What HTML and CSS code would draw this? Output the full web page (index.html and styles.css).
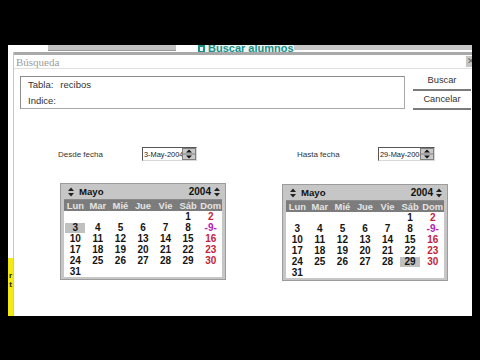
FILE: index.html
```html
<!DOCTYPE html>
<html lang="es">
<head>
<meta charset="utf-8">
<title>Búsqueda</title>
<link rel="stylesheet" href="styles.css">
</head>
<body>
<div class="screen">
  <div class="topstrip">
    <div class="field-behind"></div>
    <div class="tab-behind"><span class="tab-icon"></span><span>Buscar alumnos</span></div>
    <div class="strip-rest"></div>
  </div>
  <div class="main">
    <div class="leftcol">
      <div class="lc-white"></div>
      <div class="lc-yellow"><span>r</span><span>t</span></div>
    </div>
    <div class="dialog">
      <div class="titlebar">
        <span class="title">Búsqueda</span>
        <span class="close">✕</span>
      </div>
      <div class="toprow">
        <div class="groupbox">
          <div><span class="gl">Tabla:</span>recibos</div>
          <div>Indice:</div>
        </div>
        <div class="buttons">
          <div class="btn">Buscar</div>
          <div class="btn">Cancelar</div>
        </div>
      </div>
      <div class="daterow">
        <span class="lbl lbl1">Desde fecha</span>
        <div class="dfield dfield1">
          <span class="dtext">3-May-2004</span>
          <svg class="dspin" width="14" height="12" viewBox="0 0 14 12"><rect x=".5" y=".5" width="13" height="11" fill="#c8c8c8" stroke="#808080"/><line x1="0" y1="6" x2="14" y2="6" stroke="#808080"/><path d="M4 4.5 L7 1.5 L10 4.5Z M4 7.5 L7 10.5 L10 7.5Z" fill="#111"/></svg>
        </div>
        <span class="lbl lbl2">Hasta fecha</span>
        <div class="dfield dfield2">
          <span class="dtext">29-May-2004</span>
          <svg class="dspin" width="14" height="12" viewBox="0 0 14 12"><rect x=".5" y=".5" width="13" height="11" fill="#c8c8c8" stroke="#808080"/><line x1="0" y1="6" x2="14" y2="6" stroke="#808080"/><path d="M4 4.5 L7 1.5 L10 4.5Z M4 7.5 L7 10.5 L10 7.5Z" fill="#111"/></svg>
        </div>
      </div>
      <div class="calrow">
        <div class="cal cal1">
          <div class="cal-head">
            <svg class="cspin" width="6" height="10" viewBox="0 0 6 10"><path d="M0 4 L3 0.5 L6 4Z M0 6 L3 9.5 L6 6Z" fill="#222"/></svg>
            <span class="month">Mayo</span>
            <span class="year">2004</span>
            <svg class="cspin" width="6" height="10" viewBox="0 0 6 10"><path d="M0 4 L3 0.5 L6 4Z M0 6 L3 9.5 L6 6Z" fill="#222"/></svg>
          </div>
          <div class="cal-days"><span>Lun</span><span>Mar</span><span>Mié</span><span>Jue</span><span>Vie</span><span>Sáb</span><span>Dom</span></div>
          <div class="cal-grid">
            <span></span><span></span><span></span><span></span><span></span><span>1</span><span class="sun">2</span>
            <span><b class="sel">3</b></span><span>4</span><span>5</span><span>6</span><span>7</span><span>8</span><span class="today">-9-</span>
            <span>10</span><span>11</span><span>12</span><span>13</span><span>14</span><span>15</span><span class="sun">16</span>
            <span>17</span><span>18</span><span>19</span><span>20</span><span>21</span><span>22</span><span class="sun">23</span>
            <span>24</span><span>25</span><span>26</span><span>27</span><span>28</span><span>29</span><span class="sun">30</span>
            <span>31</span>
          </div>
        </div>
        <div class="cal cal2">
          <div class="cal-head">
            <svg class="cspin" width="6" height="10" viewBox="0 0 6 10"><path d="M0 4 L3 0.5 L6 4Z M0 6 L3 9.5 L6 6Z" fill="#222"/></svg>
            <span class="month">Mayo</span>
            <span class="year">2004</span>
            <svg class="cspin" width="6" height="10" viewBox="0 0 6 10"><path d="M0 4 L3 0.5 L6 4Z M0 6 L3 9.5 L6 6Z" fill="#222"/></svg>
          </div>
          <div class="cal-days"><span>Lun</span><span>Mar</span><span>Mié</span><span>Jue</span><span>Vie</span><span>Sáb</span><span>Dom</span></div>
          <div class="cal-grid">
            <span></span><span></span><span></span><span></span><span></span><span>1</span><span class="sun">2</span>
            <span>3</span><span>4</span><span>5</span><span>6</span><span>7</span><span>8</span><span class="today">-9-</span>
            <span>10</span><span>11</span><span>12</span><span>13</span><span>14</span><span>15</span><span class="sun">16</span>
            <span>17</span><span>18</span><span>19</span><span>20</span><span>21</span><span>22</span><span class="sun">23</span>
            <span>24</span><span>25</span><span>26</span><span>27</span><span>28</span><span><b class="sel">29</b></span><span class="sun">30</span>
            <span>31</span>
          </div>
        </div>
      </div>
    </div>
  </div>
</div>
</body>
</html>
```

FILE: styles.css
```css
html, body {
  margin: 0;
  padding: 0;
  background: #000;
}
body {
  width: 480px;
  height: 360px;
  overflow: hidden;
  font-family: "Liberation Sans", Arial, sans-serif;
}
.screen {
  margin: 45px 0 0 8px;
  width: 464px;
  height: 271px;
  background: #fff;
  display: flex;
  flex-direction: column;
  overflow: hidden;
}
.topstrip {
  height: 7px;
  display: flex;
  overflow: hidden;
  flex: none;
}
.field-behind {
  margin-left: 40px;
  width: 128px;
  height: 6px;
  box-sizing: border-box;
  background: #c2c2c2;
  border-bottom: 1px solid #9a9a9a;
}
.tab-behind {
  margin-left: 22px;
  width: 96px;
  height: 7px;
  display: flex;
  align-items: center;
  gap: 3px;
  overflow: hidden;
  color: #1e8e86;
  font-weight: bold;
  font-size: 11px;
  line-height: 7px;
  background: #eaf6f4;
}
.tab-icon {
  width: 7px;
  height: 8px;
  box-sizing: border-box;
  border: 2px solid #1e8e86;
  flex: none;
}
.strip-rest {
  flex: 1;
  height: 5px;
  background: #c6c6c6;
}
.main {
  flex: 1;
  display: flex;
  min-height: 0;
}
.leftcol {
  width: 5px;
  display: flex;
  flex-direction: column;
  flex: none;
}
.lc-white {
  flex: 1;
}
.lc-yellow {
  height: 58px;
  background: #f3e914;
  display: flex;
  flex-direction: column;
  align-items: center;
  padding-top: 13px;
  box-sizing: border-box;
  font-size: 8px;
  font-weight: bold;
  line-height: 9px;
  color: #222;
  overflow: hidden;
}
.dialog {
  flex: 1;
  border-left: 1px solid #c6c6c6;
  display: flex;
  flex-direction: column;
  min-width: 0;
}
.titlebar {
  flex: none;
  border-top: 3px solid #a9a9a9;
  border-bottom: 1px solid #e0e0e0;
  height: 13px;
  display: flex;
  align-items: center;
  justify-content: space-between;
}
.title {
  margin-left: 2px;
  font-family: "Liberation Serif", "Times New Roman", serif;
  font-size: 11px;
  color: #9c9c9c;
}
.close {
  width: 6px;
  height: 11px;
  background: #c6c6c6;
  color: #666;
  font-size: 9px;
  line-height: 11px;
  overflow: hidden;
  text-indent: 1px;
}
.toprow {
  flex: none;
  display: flex;
  align-items: flex-start;
  margin-top: 3px;
}
.groupbox {
  margin-left: 6px;
  margin-top: 4px;
  width: 385px;
  height: 33px;
  box-sizing: border-box;
  border: 1px solid #8c8c8c;
  border-right-color: #a8a8a8;
  border-bottom-color: #a8a8a8;
  padding-left: 7px;
  font-size: 9.5px;
  line-height: 16px;
  color: #333;
}
.gl {
  margin-right: 7px;
}
.buttons {
  margin-left: 8px;
  width: 58px;
  flex: none;
}
.btn {
  height: 17px;
  border-bottom: 2px solid #7a7a7a;
  text-align: center;
  font-size: 9.3px;
  line-height: 17px;
  color: #333;
}
.daterow {
  flex: none;
  display: flex;
  align-items: center;
  margin-top: 37px;
  height: 14px;
  font-size: 8px;
  color: #333;
}
.lbl {
  flex: none;
}
.lbl1 {
  margin-left: 44px;
  width: 84px;
}
.lbl2 {
  margin-left: 100px;
  width: 81px;
}
.dfield {
  flex: none;
  height: 14px;
  box-sizing: border-box;
  border: 1px solid;
  border-color: #555 #d8d8d8 #d8d8d8 #555;
  display: flex;
  align-items: center;
  background: #fff;
}
.dfield1 {
  width: 55px;
}
.dfield2 {
  width: 57px;
}
.dtext {
  flex: 1;
  min-width: 0;
  overflow: hidden;
  white-space: nowrap;
  font-size: 7.4px;
  padding-left: 1px;
  color: #222;
}
.dspin {
  flex: none;
  display: block;
}
.calrow {
  flex: none;
  display: flex;
  align-items: flex-start;
  margin-top: 22px;
}
.cal {
  flex: none;
  border: 1px solid #9c9c9c;
  background: #c6c6c6;
  padding: 0 3px 2px 3px;
}
.cal1 {
  margin-left: 46px;
}
.cal2 {
  margin-left: 56px;
  margin-top: 1px;
}
.cal-head {
  height: 15px;
  display: flex;
  align-items: center;
  font-weight: bold;
  font-size: 10px;
  color: #111;
  border-bottom: 1px solid #8a8a8a;
}
.cspin {
  display: block;
  flex: none;
}
.cal-head .cspin:first-child {
  margin-left: 4px;
}
.month {
  margin-left: 5px;
  font-size: 9.6px;
}
.year {
  margin-left: auto;
  margin-right: 3px;
}
.cal-head .cspin:last-child {
  margin-right: 2px;
}
.cal-days {
  width: 158px;
  height: 11px;
  display: grid;
  grid-template-columns: repeat(7, 1fr);
  background: #7c7c7c;
  color: #e4e4e4;
  font-weight: bold;
  font-size: 9.4px;
  line-height: 11px;
  text-align: center;
}
.cal-grid {
  width: 158px;
  display: grid;
  grid-template-columns: repeat(7, 1fr);
  grid-auto-rows: 11px;
  background: #fff;
  font-weight: bold;
  font-size: 10px;
  line-height: 11px;
  text-align: center;
  color: #151515;
}
.cal-grid .sun {
  color: #c41e3a;
}
.cal-grid .today {
  color: #b020b8;
}
.sel {
  display: inline-block;
  width: 20px;
  height: 10px;
  line-height: 10px;
  background: #c0c0c0;
  font-weight: bold;
}
```
